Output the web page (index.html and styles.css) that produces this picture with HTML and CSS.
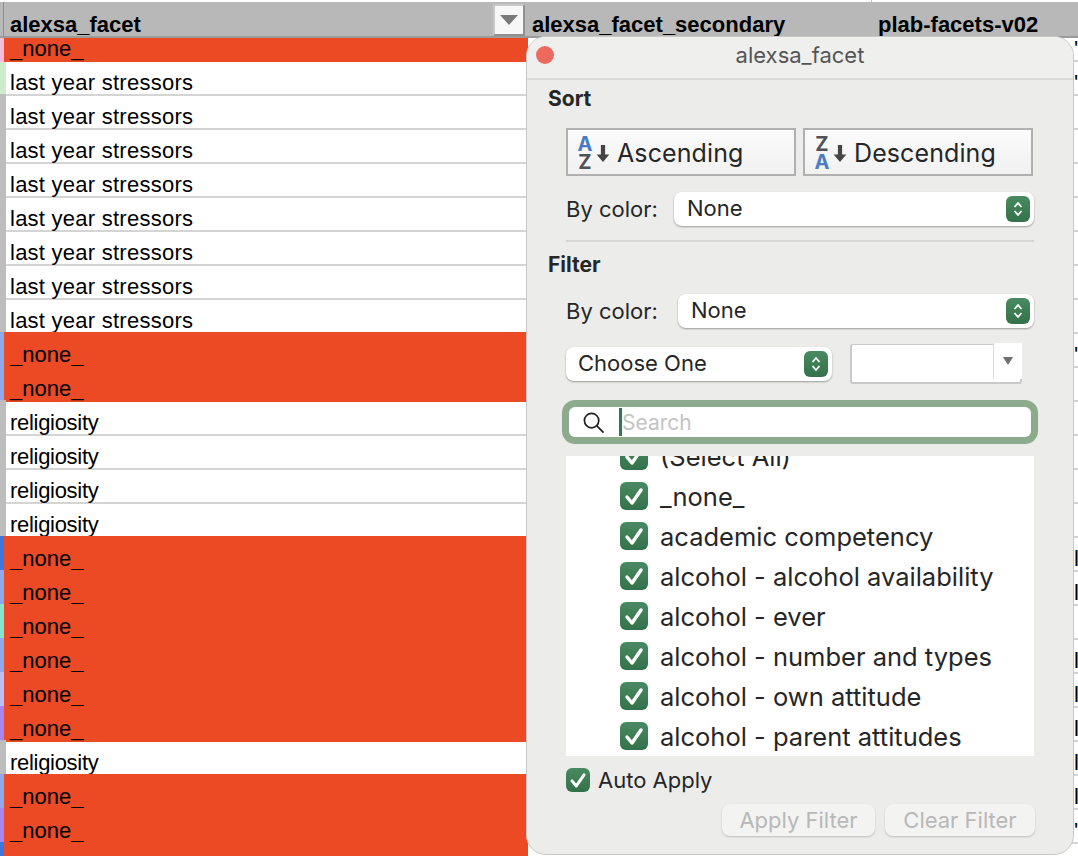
FILE: index.html
```html
<!DOCTYPE html>
<html lang="en">
<head>
<meta charset="UTF-8">
<meta name="viewport" content="width=device-width, initial-scale=1.0">
<title>alexsa_facet filter</title>
<link rel="stylesheet" href="styles.css">
</head>
<body>

<div id="sheet">
  <div class="head">
    <div class="head-cell col-a">alexsa_facet<span class="filter-btn"><i class="tri"></i></span></div>
    <div class="head-cell col-b">alexsa_facet_secondary</div>
    <div class="head-cell col-c">plab-facets-v02</div>
  </div>
  <div id="rows"></div>
</div>

<div id="filterPanel">
  <div class="titlebar">
    <span class="close"></span>
    <span class="title">alexsa_facet</span>
  </div>
  <div class="body">
    <h3>Sort</h3>
    <div class="sort-btns">
      <div class="sort-btn">
        <span class="az"><b class="blue">A</b><b class="grey">Z</b></span>
        <svg class="down" viewBox="0 0 12 18"><path d="M4 1h4v9h4l-6 7-6-7h4z"/></svg>
        Ascending
      </div>
      <div class="sort-btn">
        <span class="az"><b class="grey">Z</b><b class="blue">A</b></span>
        <svg class="down" viewBox="0 0 12 18"><path d="M4 1h4v9h4l-6 7-6-7h4z"/></svg>
        Descending
      </div>
    </div>
    <div class="color-row sort-color">
      <label>By color:</label>
      <div class="select grow">None
        <span class="stepper"><svg viewBox="0 0 12 20"><path d="M2.500 8 6 4l3.500 4M2.500 12 6 16l3.500-4"/></svg></span>
      </div>
    </div>
    <div class="divider"></div>
    <h3>Filter</h3>
    <div class="color-row filter-color">
      <label>By color:</label>
      <div class="select grow">None
        <span class="stepper"><svg viewBox="0 0 12 20"><path d="M2.500 8 6 4l3.500 4M2.500 12 6 16l3.500-4"/></svg></span>
      </div>
    </div>
    <div class="choose-row">
      <div class="select choose">Choose One
        <span class="stepper"><svg viewBox="0 0 12 20"><path d="M2.500 8 6 4l3.500 4M2.500 12 6 16l3.500-4"/></svg></span>
      </div>
      <div class="combo"><span class="combo-arrow"><i></i></span></div>
    </div>
    <div class="search">
      <svg class="glass" viewBox="0 0 24 24"><circle cx="10" cy="10" r="7.500"/><path d="m15.500 15.500 7 7"/></svg>
      <span class="caret"></span>
      <span class="placeholder">Search</span>
    </div>
    <div class="list" id="valueList"></div>
    <div class="auto-row">
      <span class="check small"><svg viewBox="0 0 28 28"><path d="m7 15 5 6 9-13"/></svg></span>
      Auto Apply
    </div>
    <div class="actions">
      <div class="action apply">Apply Filter</div>
      <div class="action clear">Clear Filter</div>
    </div>
  </div>
</div>

<script>
  // [value, gutter colour, text peeking out right of the panel]
  var rows = [
    ["_none_", "#f3bfe0", "'c"],
    ["last year stressors", "#cdeccd", "'c"],
    ["last year stressors", "", ""],
    ["last year stressors", "", ""],
    ["last year stressors", "", ""],
    ["last year stressors", "", ""],
    ["last year stressors", "", ""],
    ["last year stressors", "", ""],
    ["last year stressors", "", ""],
    ["_none_", "#8fa8ee", "'c"],
    ["_none_", "#8fa8ee", ""],
    ["religiosity", "", ""],
    ["religiosity", "", ""],
    ["religiosity", "", ""],
    ["religiosity", "", ""],
    ["_none_", "#3f78dc", "le"],
    ["_none_", "#8fa8ee", "le"],
    ["_none_", "#86e5cf", ""],
    ["_none_", "#8fa8ee", "le"],
    ["_none_", "#bdbdf5", "le"],
    ["_none_", "#a884ee", "le"],
    ["religiosity", "", "le"],
    ["_none_", "#8fa8ee", "le"],
    ["_none_", "#a884ee", "'c"],
    ["_none_", "#3f78dc", ""]
  ];

  var rowsEl = document.getElementById("rows");
  rows.forEach(function(r) {
    var row = document.createElement("div");
    row.className = "row";
    if (r[0] === "_none_") row.className += " none";
    if (r[0] === "religiosity") row.className += " rel";
    var gutter = document.createElement("span");
    gutter.className = "gutter";
    if (r[1]) gutter.style.background = r[1];
    var cell = document.createElement("span");
    cell.className = "cell";
    cell.textContent = r[0];
    var peek = document.createElement("span");
    peek.className = "peek";
    peek.textContent = r[2];
    row.appendChild(gutter);
    row.appendChild(cell);
    row.appendChild(peek);
    rowsEl.appendChild(row);
  });

  var values = ["(Select All)", "_none_", "academic competency", "alcohol - alcohol availability",
    "alcohol - ever", "alcohol - number and types", "alcohol - own attitude", "alcohol - parent attitudes"];
  var listEl = document.getElementById("valueList");
  values.forEach(function(v) {
    var item = document.createElement("div");
    item.className = "item";
    item.innerHTML = '<span class="check"><svg viewBox="0 0 28 28"><path d="m7 15 5 6 9-13"/></svg></span>';
    item.appendChild(document.createTextNode(v));
    listEl.appendChild(item);
  });
</script>
</body>
</html>
```

FILE: styles.css
```css
html, body {
  margin: 0;
  padding: 0;
  height: 100%;
  overflow: hidden;
}

body {
  font-family: "Liberation Sans", Arial, sans-serif;
  background-color: #fff;
  color: #000;
}

#sheet {
  height: 856px;
  overflow: hidden;
  padding-top: 2px;
  box-sizing: border-box;
}

.head {
  display: flex;
  height: 36px;
  background-color: #b8b8b8;
  border-bottom: 2px solid #9a9a9a;
  box-sizing: border-box;
  font-weight: bold;
  font-size: 22px;
}

.head-cell {
  position: relative;
  display: flex;
  align-items: flex-end;
  line-height: 22px;
  box-sizing: border-box;
}

.col-a {
  width: 529px;
  margin-left: 3px;
  padding-left: 6px;
  border-left: 1px solid #8f8f8f;
}
.col-b { width: 346px; }
.col-c { width: 199px; }

.col-c::before {
  content: "";
  position: absolute;
  left: -7px;
  top: -2px;
  width: 1px;
  height: 2px;
  background-color: #c4c4c4;
}

.filter-btn {
  position: absolute;
  left: 489px;
  top: 2px;
  width: 32px;
  height: 32px;
  box-sizing: border-box;
  background-color: #f7f7f7;
  border: 2px solid #8f8f8f;
  border-top-color: #c8c8c8;
  border-left-color: #c8c8c8;
  border-radius: 2px;
  display: flex;
  align-items: center;
  justify-content: center;
}

.tri {
  width: 0;
  height: 0;
  border-left: 9px solid transparent;
  border-right: 9px solid transparent;
  border-top: 10px solid #7a7a7a;
}

.row {
  position: relative;
  display: flex;
  align-items: flex-end;
  height: 34px;
  box-sizing: border-box;
  background-color: #fff;
  border-bottom: 2px solid #d4d4d4;
  font-size: 22px;
}

.row:first-child {
  height: 24px;
}

/* the fill only covers the first column and laps over the line above it */
.row.none::before {
  content: "";
  position: absolute;
  left: 0;
  top: -2px;
  bottom: -2px;
  width: 528px;
  background-color: #ec4a25;
}

.row:first-child.none::before {
  top: 0;
}

.gutter {
  position: absolute;
  left: 0;
  top: -2px;
  bottom: 0;
  width: 6px;
  background-color: #bdbdbd;
}

.row:first-child .gutter {
  top: 0;
  bottom: -2px;
}

.row:nth-child(2) .gutter {
  top: 0;
}

.row.none .gutter {
  width: 4px;
}

.cell {
  position: relative;
  top: 2px;
  padding-left: 10px;
  line-height: 26px;
  white-space: nowrap;
  letter-spacing: 0.250px;
}

.row.none .cell {
  letter-spacing: 0;
}

.row.rel .cell {
  letter-spacing: -0.300px;
}

.peek {
  position: absolute;
  left: 1074px;
  bottom: -2px;
  line-height: 26px;
  white-space: nowrap;
}

#filterPanel {
  position: absolute;
  left: 526px;
  top: 36px;
  width: 548px;
  height: 819px;
  box-sizing: border-box;
  background-color: #ececeb;
  border: 1px solid #c8c8c8;
  border-radius: 20px;
  overflow: hidden;
  font-family: Inter, "Liberation Sans", sans-serif;
  color: #262626;
}

.titlebar {
  position: relative;
  height: 43px;
  box-sizing: border-box;
  padding-bottom: 6px;
  background-color: #efefee;
  border-bottom: 2px solid #d9d9d8;
  display: flex;
  align-items: center;
  justify-content: center;
}

.close {
  position: absolute;
  left: 9px;
  top: 9px;
  width: 18px;
  height: 18px;
  border-radius: 50%;
  background-color: #ee6a5f;
}

.title {
  font-size: 22px;
  color: #555;
}

.body {
  padding: 0 39px 0 21px;
}

h3 {
  margin: 0;
  font-size: 21px;
  line-height: 26px;
  font-weight: bold;
}

.body > h3:first-child {
  margin-top: 6px;
}

.sort-btns {
  display: flex;
  gap: 7px;
  margin: 16px 0 0 18px;
}

.sort-btn {
  display: flex;
  align-items: center;
  width: 230px;
  height: 48px;
  box-sizing: border-box;
  border: 2px solid #b0b0b0;
  background: linear-gradient(#fbfbfb, #f1f1f1);
  padding: 2px 0 0 8px;
  font-size: 25px;
  letter-spacing: 0.100px;
}

.az {
  display: flex;
  flex-direction: column;
  font-size: 20px;
  line-height: 18px;
  width: 18px;
  text-align: center;
}

.blue { color: #4a7cc4; }
.grey { color: #4f5257; }

.down {
  width: 14px;
  height: 19px;
  margin: 0 7px 0 2px;
  fill: #444;
}

.color-row {
  display: flex;
  align-items: center;
  margin-left: 18px;
  height: 34px;
}

.sort-color { margin-top: 16px; }
.filter-color { margin-top: 16px; }

label {
  font-size: 22px;
  white-space: nowrap;
}

.sort-color label { width: 108px; }
.filter-color label { width: 112px; }

.select {
  position: relative;
  height: 34px;
  box-sizing: border-box;
  background-color: #fff;
  border-radius: 8px;
  box-shadow: 0 1px 2px rgba(0, 0, 0, 0.35);
  padding-left: 13px;
  font-size: 22px;
  line-height: 33px;
}

.grow {
  flex: 1;
}

.choose {
  width: 266px;
  padding-left: 12px;
}

.stepper {
  position: absolute;
  right: 4px;
  top: 4px;
  width: 24px;
  height: 26px;
  border-radius: 6px;
  background: linear-gradient(#4a8a60, #33724a);
  display: flex;
  align-items: center;
  justify-content: center;
}

.stepper svg {
  width: 12px;
  height: 20px;
  fill: none;
  stroke: #fff;
  stroke-width: 1.800;
}

.divider {
  height: 2px;
  margin: 14px 0 0 18px;
  background-color: #d6d6d6;
}

.divider + h3 {
  margin-top: 10px;
}

.choose-row {
  display: flex;
  align-items: center;
  margin: 16px 0 0 18px;
  gap: 18px;
}

.combo {
  position: relative;
  width: 172px;
  height: 40px;
  box-sizing: border-box;
  background-color: #fff;
  border: 2px solid #c9c9c9;
  border-top-width: 1px;
  border-radius: 3px;
}

.combo-arrow {
  position: absolute;
  right: -2px;
  top: -2px;
  width: 28px;
  height: 36px;
  background-color: #fff;
  border-left: 1px solid #dcdcdc;
  display: flex;
  align-items: center;
  justify-content: center;
}

.combo-arrow i {
  width: 0;
  height: 0;
  border-left: 5px solid transparent;
  border-right: 5px solid transparent;
  border-top: 8px solid #6f6f6f;
}

.search {
  position: relative;
  display: flex;
  align-items: center;
  height: 30px;
  margin: 23px 3px 0 21px;
  background-color: #fff;
  border-radius: 6px;
  box-shadow: 0 0 0 7px #8cab8c;
  font-size: 21px;
}

.glass {
  width: 23px;
  height: 23px;
  margin-left: 13px;
  fill: none;
  stroke: #222;
  stroke-width: 1.800;
}

.caret {
  width: 3px;
  height: 28px;
  margin-left: 14px;
  background-color: #2f7a4b;
}

.placeholder {
  color: #c4c4c4;
}

.list {
  height: 300px;
  margin: 19px 0 0 18px;
  background-color: #fff;
  overflow: hidden;
  position: relative;
}

.item {
  display: flex;
  align-items: center;
  height: 40px;
  padding-left: 54px;
  font-size: 25.500px;
  white-space: nowrap;
  position: relative;
  top: -20px;
}

.check {
  display: inline-flex;
  flex-shrink: 0;
  width: 28px;
  height: 28px;
  margin-right: 12px;
  border-radius: 6px;
  background: linear-gradient(#4a8a60, #33724a);
}

.check svg {
  width: 100%;
  height: 100%;
  fill: none;
  stroke: #fff;
  stroke-width: 3.500;
  stroke-linecap: round;
  stroke-linejoin: round;
}

.check.small {
  width: 24px;
  height: 24px;
  margin-right: 8px;
}

.auto-row {
  display: flex;
  align-items: center;
  margin: 11px 0 0 18px;
  font-size: 22px;
}

.actions {
  display: flex;
  justify-content: flex-end;
  gap: 10px;
  margin: 11px -1px 0 0;
}

.action {
  height: 32px;
  box-sizing: border-box;
  background-color: #f3f3f2;
  border-radius: 8px;
  box-shadow: 0 1px 2px rgba(0, 0, 0, 0.2);
  color: #b8b8b8;
  font-size: 22px;
  line-height: 32px;
  text-align: center;
}

.apply { width: 153px; }
.clear { width: 150px; }
```
